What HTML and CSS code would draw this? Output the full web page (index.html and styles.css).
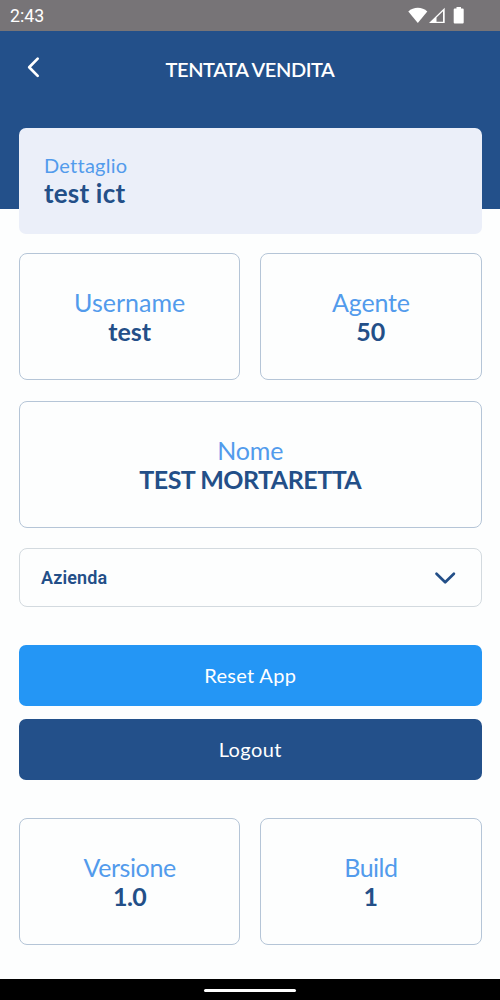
FILE: index.html
```html
<!DOCTYPE html>
<html lang="it">
<head>
<meta charset="utf-8">
<title>Tentata Vendita</title>
<link rel="stylesheet" href="styles.css">
</head>
<body>
<div class="screen">
  <div class="status">
    <span class="clock">2:43</span>
    <svg class="status-icons" width="58" height="20" viewBox="0 0 58 20" fill="#fff">
      <path d="M0.3 4.500C5.500-.4 14.200-.4 19.300 4.500L9.800 16z"/>
      <path fill-rule="evenodd" d="M21 16L36.700.7V16zM28.500 14.800H35V4.300L28.500 10.600z"/>
      <path d="M48.500 0h4.500v1.500h1.700q1 0 1 1V15.500q0 1-1 1h-8q-1 0-1-1V2.500q0-1 1-1h1.800z"/>
    </svg>
  </div>
  <header class="header">
    <svg class="back" width="14" height="22" viewBox="0 0 14 22"><path d="M11.700 2.600L3.200 11.300L11.700 19.900" fill="none" stroke="#fff" stroke-width="2.700" stroke-linecap="round" stroke-linejoin="round"/></svg>
    <h1 class="title">TENTATA VENDITA</h1>
  </header>
  <main class="content">
    <section class="detail">
      <span class="detail-label">Dettaglio</span>
      <span class="detail-value">test ict</span>
    </section>
    <div class="row">
      <section class="card"><span class="label">Username</span><span class="value">test</span></section>
      <section class="card"><span class="label agente">Agente</span><span class="value">50</span></section>
    </div>
    <section class="card"><span class="label agente">Nome</span><span class="value name">TEST MORTARETTA</span></section>
    <div class="select">
      <span>Azienda</span>
      <svg width="22" height="14" viewBox="0 0 22 14"><path d="M2.500 2.800L11.200 11.300L19.900 2.800" fill="none" stroke="#234f88" stroke-width="2.700" stroke-linecap="round" stroke-linejoin="round"/></svg>
    </div>
    <div class="actions">
      <button class="button reset">Reset App</button>
      <button class="button logout">Logout</button>
    </div>
    <div class="row">
      <section class="card"><span class="label versione">Versione</span><span class="value version">1.0</span></section>
      <section class="card"><span class="label build">Build</span><span class="value">1</span></section>
    </div>
  </main>
  <footer class="nav"><div class="handle"></div></footer>
</div>
</body>
</html>
```
FILE: styles.css
```css
* { box-sizing: border-box; }
body { margin: 0; font-family: Lato, sans-serif; background: #fdfefe; }
.screen { width: 500px; height: 1000px; display: flex; flex-direction: column; overflow: hidden; }
.status { height: 31px; flex: none; background: #777477; display: flex; justify-content: space-between; padding: 0 34px 0 10px; }
.clock { font: 17.8px/32px Roboto, sans-serif; color: #fff; }
.status-icons { margin-top: 7px; }
.header { height: 178px; flex: none; background: #23508a; display: grid; grid-template-columns: 50px 1fr 50px; align-items: start; }
.back { margin: 25px 0 0 26px; }
.title { margin: 26px 0 0; font-size: 20px; line-height: 24px; font-weight: 600; letter-spacing: -.43px; color: #fff; text-align: center; white-space: nowrap; }
.content { margin-top: -81px; padding: 0 18.5px 0 19px; display: flex; flex-direction: column; flex: 1; }
.detail { height: 106px; background: #ebeff9; border-radius: 7px; padding: 25px; display: flex; flex-direction: column; align-items: flex-start; margin-bottom: 19px; }
.detail-label { font-size: 20px; line-height: 24px; color: #529bec; letter-spacing: .25px; }
.detail-value { font-size: 26px; line-height: 33px; font-weight: 700; color: #234f88; letter-spacing: .2px; }
.row { display: grid; grid-template-columns: 1fr 1fr; gap: 20px; margin-bottom: 21px; }
.card { height: 127px; border: 1px solid #b5c5d7; border-radius: 8px; display: flex; flex-direction: column; justify-content: center; align-items: center; line-height: 29px; font-size: 25px; }
.label { color: #529bec; }
.value { color: #234f88; font-weight: 700; }
.agente { letter-spacing: -.2px; }
.name { letter-spacing: -.5px; }
.versione { letter-spacing: -.4px; }
.version { letter-spacing: -.6px; }
.build { letter-spacing: -.5px; }
.select { height: 59px; margin: 20px 0 38px; border: 1px solid #d3dadf; border-radius: 8px; padding: 0 25px 0 21px; display: flex; align-items: center; justify-content: space-between; font: 600 18px/24px Roboto, sans-serif; letter-spacing: .12px; color: #234f88; }
.actions { display: flex; flex-direction: column; gap: 13px; margin-bottom: 38px; }
.button { height: 61px; border: 0; border-radius: 7px; padding: 0 0 2px; color: #fff; font: 400 20px/24px Lato, sans-serif; }
.reset { background: #2496f5; letter-spacing: .3px; }
.logout { background: #23508a; letter-spacing: .4px; }
.nav { height: 21px; flex: none; background: #000; display: flex; justify-content: center; padding-top: 10px; }
.handle { width: 92px; height: 3px; border-radius: 2px; background: #fff; }
```
